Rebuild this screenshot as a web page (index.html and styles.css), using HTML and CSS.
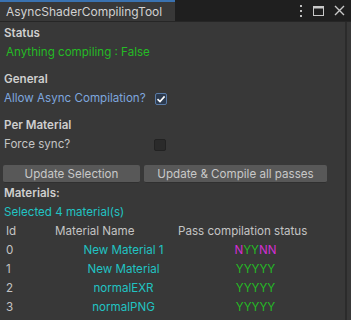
FILE: index.html
```html
<!DOCTYPE html>
<html lang="en">
  <head>
    <meta charset="UTF-8" />
    <title>AsyncShaderCompilingTool</title>
    <link rel="stylesheet" href="styles.css">
  </head>
  <body>
    <!-- Window tab bar -->
    <div class="tabbar">
      <div class="tab">AsyncShaderCompilingTool</div>
      <div class="tab-icons">
        <svg width="4" height="12" viewBox="0 0 4 12"><rect x="1" y="0" width="2" height="2" fill="#bdbdbd"/><rect x="1" y="5" width="2" height="2" fill="#bdbdbd"/><rect x="1" y="10" width="2" height="2" fill="#bdbdbd"/></svg>
        <svg width="11" height="10" viewBox="0 0 11 10"><rect x="0.5" y="0.5" width="10" height="9" fill="none" stroke="#c8c8c8"/><rect x="0.5" y="0.5" width="10" height="2" fill="#c8c8c8"/></svg>
        <svg width="11" height="11" viewBox="0 0 11 11"><path d="M1 1 L10 10 M10 1 L1 10" stroke="#c8c8c8" stroke-width="1.4"/></svg>
      </div>
    </div>

    <!-- Window content -->
    <div class="content">
      <div class="label bold">Status</div>
      <div class="label green">Anything compiling : False</div>

      <div class="label bold section">General</div>
      <div class="field">
        <span class="label blue field-name">Allow Async Compilation?</span>
        <span class="checkbox checked">
          <svg width="10" height="10" viewBox="0 0 10 10"><path d="M1.5 5.2 L4 7.6 L8.6 2.4" fill="none" stroke="#ffffff" stroke-width="1.6"/></svg>
        </span>
      </div>

      <div class="label bold section">Per Material</div>
      <div class="field">
        <span class="label field-name">Force sync?</span>
        <span class="checkbox"></span>
      </div>

      <div class="buttons">
        <button class="btn btn-small">Update Selection</button>
        <button class="btn btn-wide">Update &amp; Compile all passes</button>
      </div>

      <div class="label bold">Materials:</div>
      <div class="label cyan">Selected 4 material(s)</div>

      <div class="table">
        <div class="th">Id</div>
        <div class="th">Material Name</div>
        <div class="th">Pass compilation status</div>

        <div class="td">0</div>
        <div class="td name">New Material 1</div>
        <div class="td status"><span class="magenta">N</span><span class="green">YY</span><span class="magenta">NN</span></div>

        <div class="td">1</div>
        <div class="td name">New Material</div>
        <div class="td status green">YYYYY</div>

        <div class="td">2</div>
        <div class="td name">normalEXR</div>
        <div class="td status green">YYYYY</div>

        <div class="td">3</div>
        <div class="td name">normalPNG</div>
        <div class="td status green">YYYYY</div>
      </div>
    </div>
  </body>
</html>
```

FILE: styles.css
```css
/* Editor window */
body {
  margin: 0;
  width: 351px;
  height: 320px;
  overflow: hidden;
  background-color: #383838;
  font-family: "Inter", "Liberation Sans", sans-serif;
  font-size: 11.6px;
  color: #c4c4c4;
}

/* Tab bar */
.tabbar {
  height: 21px;
  background-color: #1f1f1f;
  border-bottom: 1px solid #262626;
  display: flex;
  justify-content: space-between;
  align-items: stretch;
}

.tab {
  width: 169px;
  padding-left: 6px;
  background-color: #383838;
  border-top: 2px solid #3a72b0;
  font-size: 12px;
  line-height: 19px;
  color: #d2d2d2;
}

.tab-icons {
  display: flex;
  align-items: center;
  gap: 10px;
  padding-right: 6px;
}

/* Content */
.content {
  padding: 2px 0 0 4px;
  border-right: 2px solid #2b2b2b;
  margin-right: 4px;
  height: 297px;
}

.label {
  line-height: 19px;
  height: 19px;
}

.bold {
  font-weight: 600;
  color: #cfcfcf;
}

.section {
  margin-top: 8px;
}

.green {
  color: #25bb25;
}

.content > .green {
  padding-left: 2px;
}

.blue {
  color: #7ea6de;
}

.cyan {
  color: #21c3c3;
}

.magenta {
  color: #d22fd2;
}

.field {
  display: flex;
  align-items: center;
  height: 19px;
}

.field-name {
  width: 150px;
}

.checkbox {
  width: 12px;
  height: 12px;
  box-sizing: border-box;
  border: 1px solid #222222;
  background-color: #2a2a2a;
  border-radius: 2px;
  display: flex;
  align-items: center;
  justify-content: center;
}

.checkbox.checked {
  background-color: #2c3a4e;
  border-color: #5a7ba6;
  margin-left: 1px;
}

/* Buttons */
.buttons {
  display: flex;
  gap: 5px;
  margin-top: 11px;
  margin-bottom: 1px;
}

.btn {
  height: 18px;
  padding: 0;
  background-color: #585858;
  border: none;
  border-bottom: 1px solid #303030;
  border-radius: 2px;
  color: #c8c8c8;
  font-family: "Inter", "Liberation Sans", sans-serif;
  font-size: 11.6px;
  margin-left: -1px;
}

.btn-small {
  width: 137px;
}

.btn-wide {
  width: 183px;
}

/* Materials table */
.table {
  display: grid;
  grid-template-columns: 49px 123px 1fr;
  margin-left: 2px;
}

.th,
.td {
  line-height: 19px;
  height: 19px;
}

.td.name {
  color: #21c3c3;
  text-align: center;
  padding-left: 14px;
}

.td.status {
  text-align: center;
  padding-right: 12px;
}
```
